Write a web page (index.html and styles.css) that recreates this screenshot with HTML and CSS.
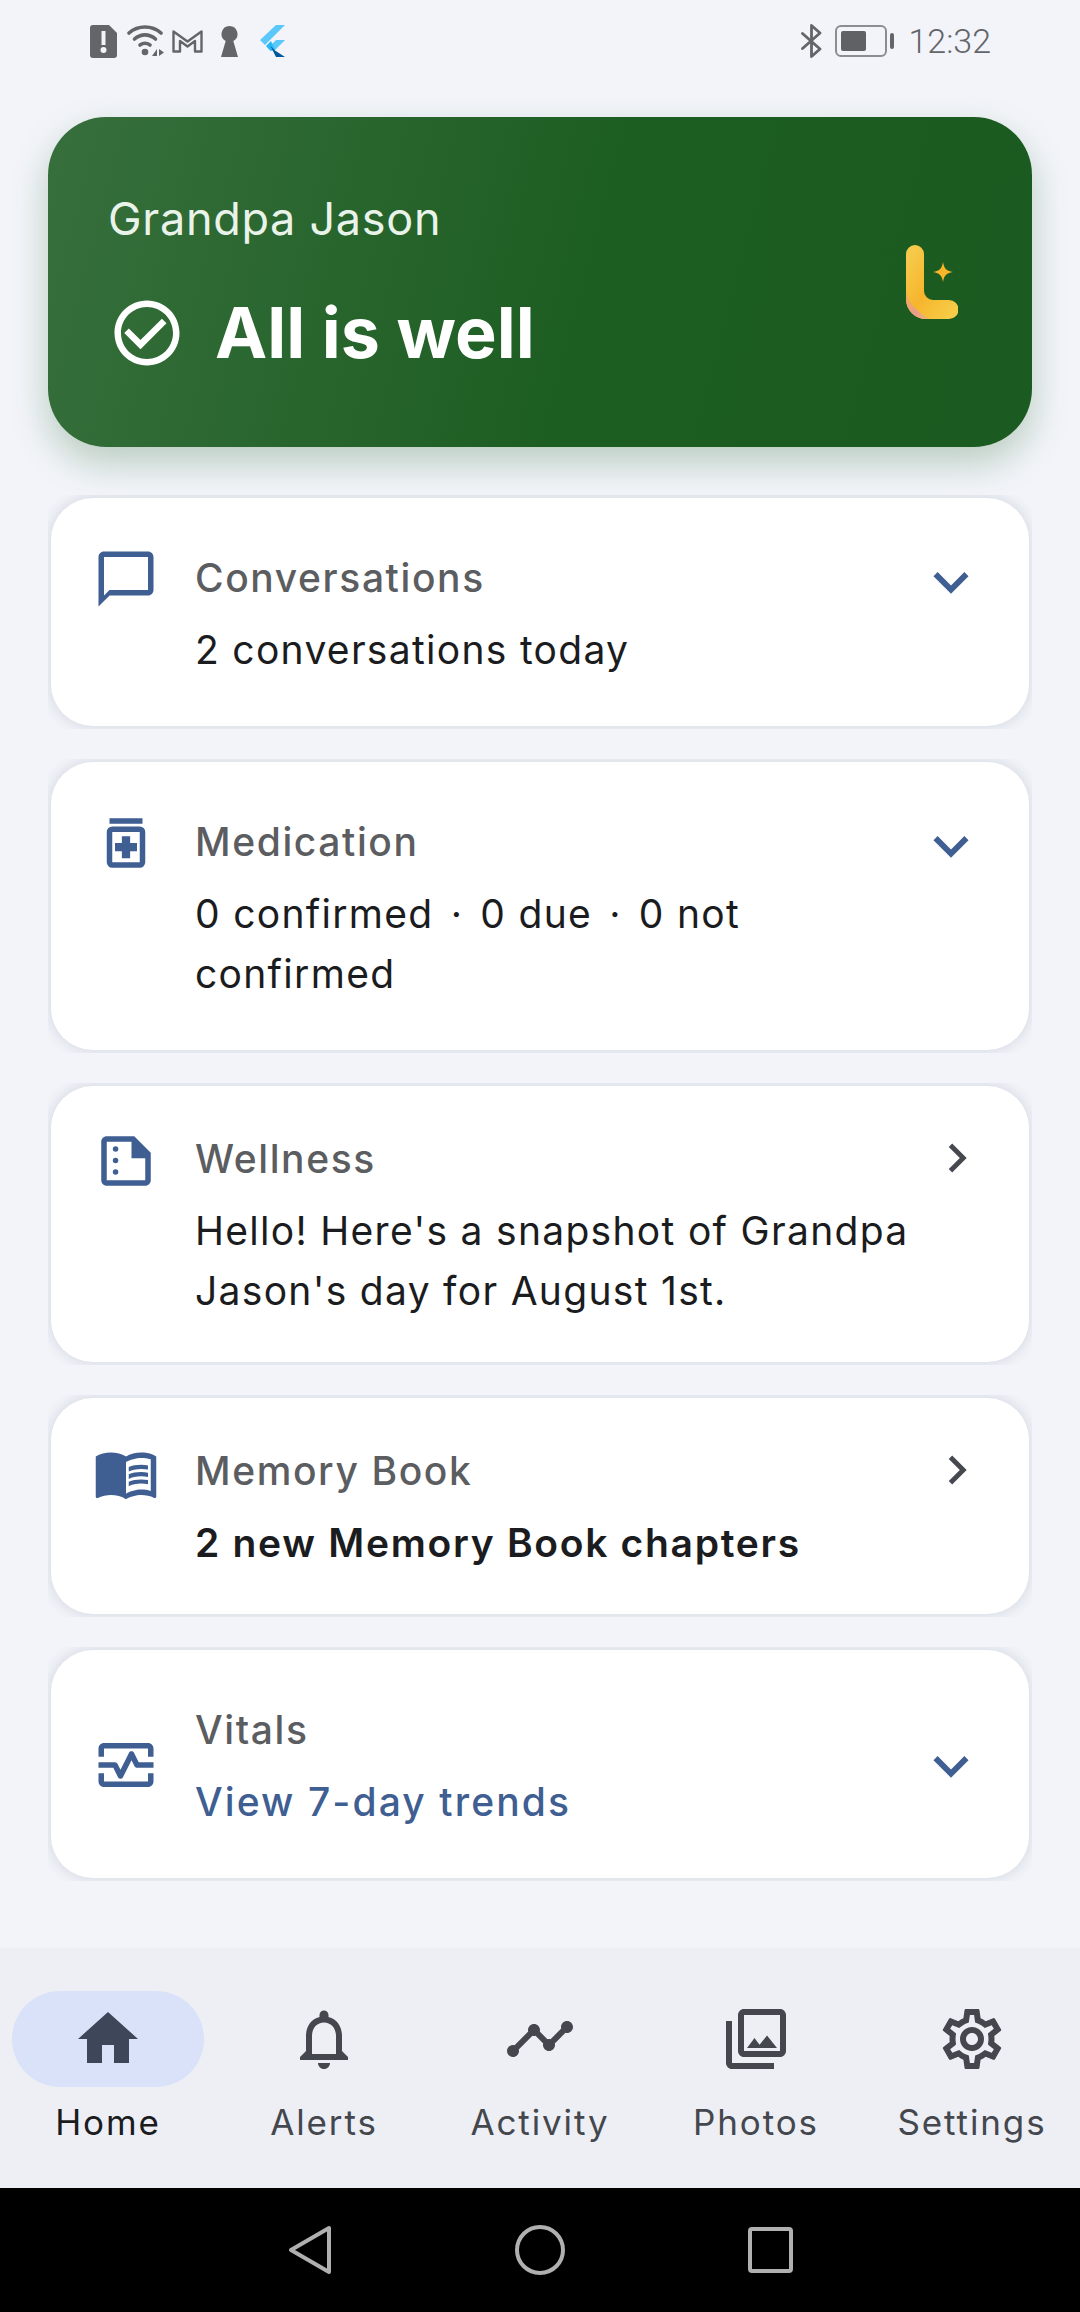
FILE: index.html
```html
<!DOCTYPE html>
<html lang="en">
<head>
    <meta charset="UTF-8">
    <meta name="viewport" content="width=device-width, initial-scale=1.0">
    <title>Home</title>
    <link rel="stylesheet" href="styles.css">
</head>
<body>
    <div class="status-bar">
        <div class="status-left">
            <svg class="st-sim" viewBox="0 0 27 33"><path fill="#636569" fill-rule="evenodd" d="M3 0h16l8 8v22a3 3 0 0 1-3 3H3a3 3 0 0 1-3-3V3a3 3 0 0 1 3-3zM11.500 6v14h4V6zM13.500 22a3 3 0 1 0 0 6 3 3 0 0 0 0-6z"/></svg>
            <svg class="st-wifi" viewBox="0 0 38 32"><g fill="none" stroke="#636569" stroke-width="3.600" stroke-linecap="round"><path d="M2 8C11 0 25 0 34 8"/><path d="M7.500 14C14 8.500 22 8.500 28.500 14"/><path d="M13 20c3.500-2.500 6.500-2.500 10 0"/></g><circle cx="18" cy="27" r="3.300" fill="#636569"/><path fill="#636569" d="M30 24v7h-5zM32 24l5 3.500-5 3.500z"/></svg>
            <svg class="st-gmail" viewBox="0 0 31 24"><path fill="none" stroke="#636569" stroke-width="2.400" stroke-linejoin="round" d="M1.500 2.500l14 10 14-10v20h-6.500V12l-7.500 5.500L8 12v10.500H1.500z"/></svg>
            <svg class="st-key" viewBox="0 0 17 31"><path fill="#636569" d="M8.500 0a8 8 0 0 1 3.800 15L17 31H0l4.700-16A8 8 0 0 1 8.500 0z"/></svg>
            <svg class="st-flutter" viewBox="0 0 26 32"><path fill="#5ac8fa" d="M17 0h9L6 20l-5-5zM17 15h9l-10 10-4.500-4.500z"/><path fill="#29b6f6" d="M7 21l5-5 4 9-4.500 1z"/><path fill="#01579b" d="M11.500 21l4.500 4.500L26 32h-9z"/></svg>
        </div>
        <div class="status-right">
            <svg class="st-bt" viewBox="0 0 21 34"><path fill="none" stroke="#636569" stroke-width="2.800" stroke-linecap="round" stroke-linejoin="round" d="M1.500 9.500L19 25l-8.500 7.500V1.500L19 9 1.500 24.500"/></svg>
            <div class="battery">
                <div class="battery-body"><div class="battery-fill"></div></div>
                <div class="battery-nub"></div>
            </div>
            <span class="clock">12:32</span>
        </div>
    </div>

    <main class="content">
        <section class="hero">
            <div class="hero-text">
                <div class="hero-name">Grandpa Jason</div>
                <div class="hero-status">
                    <svg class="hero-check" viewBox="0 0 24 24"><path fill="#fff" d="M16.590 7.580 10 14.170l-3.590-3.580L5 12l5 5 8-8zM12 2C6.480 2 2 6.480 2 12s4.480 10 10 10 10-4.480 10-10S17.520 2 12 2zm0 18c-4.420 0-8-3.580-8-8s3.580-8 8-8 8 3.580 8 8-3.580 8-8 8z"/></svg>
                    <span>All is well</span>
                </div>
            </div>
            <svg class="hero-logo" viewBox="0 0 52 74">
                <defs>
                    <linearGradient id="logoGrad" x1="0" y1="0" x2="1" y2="1">
                        <stop offset="0" stop-color="#f6cf52"/>
                        <stop offset="0.5" stop-color="#f7b52e"/>
                        <stop offset="1" stop-color="#f7d14c"/>
                    </linearGradient>
                    <linearGradient id="logoFoot" x1="0" y1="0" x2="1" y2="1">
                        <stop offset="0" stop-color="#f3b04a"/>
                        <stop offset="0.6" stop-color="#ea9c8e"/>
                        <stop offset="1" stop-color="#f3b866"/>
                    </linearGradient>
                </defs>
                <path fill="url(#logoGrad)" d="M9 0a9 9 0 0 1 9 9v37a9 9 0 0 0 9 9h16a9 9 0 0 1 0 19H20A20 20 0 0 1 0 54V9a9 9 0 0 1 9-9z"/>
                <path fill="url(#logoFoot)" d="M0 44c1 14 12 24 24 30h-4A20 20 0 0 1 0 54z"/>
                <path fill="#f8b52c" d="M37 17c1 6 3 9 10 10-7 1-9 4-10 10-1-6-3-9-10-10 7-1 9-4 10-10z"/>
            </svg>
        </section>

        <div class="card-clip">
            <article class="card card-tall">
                <svg class="card-icon" viewBox="0 0 24 24"><path d="M20 2H4c-1.100 0-2 .9-2 2v18l4-4h14c1.100 0 2-.9 2-2V4c0-1.100-.9-2-2-2zm0 14H6l-2 2V4h16v12z"/></svg>
                <div class="card-body">
                    <h2 class="card-title">Conversations</h2>
                    <p class="card-text">2 conversations today</p>
                </div>
                <svg class="card-chevron chevron-down" viewBox="0 0 24 24"><path d="M16.590 8.590 12 13.170 7.410 8.590 6 10l6 6 6-6z"/></svg>
            </article>
        </div>

        <div class="card-clip">
            <article class="card card-tall">
                <svg class="card-icon" viewBox="0 0 24 24"><path fill-rule="evenodd" d="M6 3h12v2H6zM7 6h10a2 2 0 0 1 2 2v11a2 2 0 0 1-2 2H7a2 2 0 0 1-2-2V8a2 2 0 0 1 2-2zM7 8v11h10V8zM10.500 9.500h3v2.500H16v3h-2.500v2.500h-3V15H8v-3h2.500z"/></svg>
                <div class="card-body">
                    <h2 class="card-title">Medication</h2>
                    <p class="card-text">0 confirmed&hairsp;&nbsp;·&nbsp;&hairsp;0 due&hairsp;&nbsp;·&nbsp;&hairsp;0 not confirmed</p>
                </div>
                <svg class="card-chevron chevron-down" viewBox="0 0 24 24"><path d="M16.590 8.590 12 13.170 7.410 8.590 6 10l6 6 6-6z"/></svg>
            </article>
        </div>

        <div class="card-clip">
            <article class="card">
                <svg class="card-icon" viewBox="0 0 24 24"><path fill-rule="evenodd" d="M15 3H5c-1.100 0-2 .9-2 2v14c0 1.100.9 2 2 2h14c1.100 0 2-.9 2-2V9zM5 19V5h9v6h5v8z"/><circle cx="8.200" cy="7.600" r="1"/><circle cx="8.200" cy="11.800" r="1"/><circle cx="8.200" cy="16" r="1"/></svg>
                <div class="card-body">
                    <h2 class="card-title">Wellness</h2>
                    <p class="card-text">Hello! Here's a snapshot of Grandpa Jason's day for August 1st.</p>
                </div>
                <svg class="card-chevron chevron-right" viewBox="0 0 24 24"><path d="M10 6 8.590 7.410 13.170 12l-4.580 4.590L10 18l6-6z"/></svg>
            </article>
        </div>

        <div class="card-clip">
            <article class="card">
                <svg class="card-icon" viewBox="0 0 24 24"><path d="M21 5c-1.110-.35-2.330-.5-3.500-.5-1.950 0-4.050.4-5.500 1.500-1.450-1.100-3.550-1.500-5.500-1.500S2.450 4.900 1 6v14.650c0 .25.25.5.5.5.1 0 .15-.05.25-.05C3.100 20.450 5.050 20 6.500 20c1.950 0 4.050.4 5.500 1.500 1.350-.85 3.800-1.500 5.500-1.500 1.650 0 3.350.3 4.750 1.050.1.05.15.05.25.05.25 0 .5-.25.5-.5V6c-.6-.45-1.250-.75-2-1zm0 13.500c-1.100-.35-2.300-.5-3.500-.5-1.700 0-4.150.65-5.500 1.500V8c1.350-.85 3.800-1.500 5.500-1.500 1.200 0 2.400.15 3.500.5v11.500z"/><path d="M17.500 10.500c.88 0 1.730.09 2.500.26V9.240c-.79-.15-1.640-.24-2.500-.24-1.700 0-3.240.29-4.500.83v1.660c1.130-.64 2.700-.99 4.500-.99zM13 12.490v1.660c1.130-.64 2.700-.99 4.500-.99.88 0 1.730.09 2.500.26V11.900c-.79-.15-1.640-.24-2.500-.24-1.700 0-3.240.3-4.500.83zM17.500 14.330c-1.700 0-3.240.29-4.500.83v1.660c1.130-.64 2.700-.99 4.500-.99.88 0 1.730.09 2.500.26v-1.520c-.79-.16-1.640-.24-2.500-.24z"/></svg>
                <div class="card-body">
                    <h2 class="card-title">Memory Book</h2>
                    <p class="card-text card-text-strong">2 new Memory Book chapters</p>
                </div>
                <svg class="card-chevron chevron-right" viewBox="0 0 24 24"><path d="M10 6 8.590 7.410 13.170 12l-4.580 4.590L10 18l6-6z"/></svg>
            </article>
        </div>

        <div class="card-clip">
            <article class="card card-tall card-center">
                <svg class="card-icon" viewBox="0 0 24 24"><path d="M20 4H4c-1.100 0-2 .9-2 2v3h2V6h16v3h2V6c0-1.100-.9-2-2-2zm0 14H4v-3H2v3c0 1.100.9 2 2 2h16c1.100 0 2-.9 2-2v-3h-2v3z"/><path d="M14.890 7.550c-.34-.68-1.450-.68-1.790 0L10 13.760l-1.110-2.210A1.010 1.010 0 0 0 8 11H2v2h5.380l1.720 3.450c.18.34.52.55.9.55s.72-.21.89-.55L14 10.240l1.110 2.210c.17.34.51.55.89.55h6v-2h-5.380l-1.720-3.450z"/></svg>
                <div class="card-body">
                    <h2 class="card-title">Vitals</h2>
                    <p class="card-text card-text-link">View 7-day trends</p>
                </div>
                <svg class="card-chevron chevron-down" viewBox="0 0 24 24"><path d="M16.590 8.590 12 13.170 7.410 8.590 6 10l6 6 6-6z"/></svg>
            </article>
        </div>
    </main>

    <nav class="bottom-nav">
        <div class="nav-item nav-active">
            <div class="nav-pill"><svg viewBox="0 0 24 24"><path d="M10 20v-6h4v6h5v-8h3L12 3 2 12h3v8z"/></svg></div>
            <span>Home</span>
        </div>
        <div class="nav-item">
            <div class="nav-pill"><svg viewBox="0 0 24 24"><path d="M12 22c1.100 0 2-.9 2-2h-4c0 1.100.9 2 2 2zm6-6v-5c0-3.070-1.630-5.640-4.500-6.320V4c0-.83-.67-1.500-1.500-1.500s-1.500.67-1.500 1.500v.68C7.640 5.360 6 7.920 6 11v5l-2 2v1h16v-1l-2-2zm-2 1H8v-6c0-2.480 1.510-4.500 4-4.500s4 2.020 4 4.500v6z"/></svg></div>
            <span>Alerts</span>
        </div>
        <div class="nav-item">
            <div class="nav-pill"><svg viewBox="0 0 24 24"><path d="M23 8c0 1.100-.9 2-2 2-.18 0-.35-.02-.51-.07l-3.560 3.550c.05.16.07.34.07.52 0 1.100-.9 2-2 2s-2-.9-2-2c0-.18.02-.36.07-.52l-2.550-2.550c-.16.05-.34.07-.52.07s-.36-.02-.52-.07l-4.550 4.560c.05.16.07.33.07.51 0 1.100-.9 2-2 2s-2-.9-2-2 .9-2 2-2c.18 0 .35.02.51.07l4.560-4.550C8.020 9.360 8 9.180 8 9c0-1.100.9-2 2-2s2 .9 2 2c0 .18-.02.36-.07.52l2.550 2.550c.16-.05.34-.07.52-.07s.36.02.52.07l3.550-3.560C19.020 8.350 19 8.180 19 8c0-1.100.9-2 2-2s2 .9 2 2z"/></svg></div>
            <span>Activity</span>
        </div>
        <div class="nav-item">
            <div class="nav-pill"><svg viewBox="0 0 24 24"><path d="M20 4v12H8V4h12m0-2H8c-1.100 0-2 .9-2 2v12c0 1.100.9 2 2 2h12c1.100 0 2-.9 2-2V4c0-1.100-.9-2-2-2zm-8.500 9.670 1.690 2.260 2.480-3.100L19 15H9zM2 6v14c0 1.100.9 2 2 2h14v-2H4V6H2z"/></svg></div>
            <span>Photos</span>
        </div>
        <div class="nav-item">
            <div class="nav-pill"><svg viewBox="0 0 24 24"><path d="M19.430 12.980c.04-.32.07-.64.07-.98 0-.34-.03-.66-.07-.98l2.110-1.650c.19-.15.24-.42.12-.64l-2-3.460c-.09-.16-.26-.25-.44-.25-.06 0-.12.01-.17.03l-2.490 1c-.52-.4-1.080-.73-1.690-.98l-.38-2.650C14.460 2.180 14.250 2 14 2h-4c-.25 0-.46.18-.49.42l-.38 2.650c-.61.25-1.170.59-1.690.98l-2.490-1c-.06-.02-.12-.03-.18-.03-.17 0-.34.09-.43.25l-2 3.460c-.13.22-.07.49.12.64l2.110 1.650c-.04.32-.07.65-.07.98 0 .33.03.66.07.98l-2.110 1.650c-.19.15-.24.42-.12.64l2 3.460c.09.16.26.25.44.25.06 0 .12-.01.17-.03l2.490-1c.52.4 1.080.73 1.690.98l.38 2.650c.03.24.24.42.49.42h4c.25 0 .46-.18.49-.42l.38-2.650c.61-.25 1.170-.59 1.690-.98l2.490 1c.06.02.12.03.18.03.17 0 .34-.09.43-.25l2-3.460c.12-.22.07-.49-.12-.64l-2.110-1.650zm-1.980-1.710c.04.31.05.52.05.73 0 .21-.02.43-.05.73l-.14 1.130.89.7 1.080.84-.7 1.210-1.270-.51-1.040-.42-.9.68c-.43.32-.84.56-1.250.73l-1.060.43-.16 1.130-.2 1.350h-1.400l-.19-1.350-.16-1.130-1.060-.43c-.43-.18-.83-.41-1.230-.71l-.91-.7-1.060.43-1.270.51-.7-1.210 1.080-.84.89-.7-.14-1.130c-.03-.31-.05-.54-.05-.74s.02-.43.05-.73l.14-1.130-.89-.7-1.080-.84.7-1.210 1.270.51 1.040.42.9-.68c.43-.32.84-.56 1.250-.73l1.060-.43.16-1.130.2-1.350h1.390l.19 1.350.16 1.130 1.060.43c.43.18.83.41 1.230.71l.91.7 1.060-.43 1.270-.51.7 1.210-1.070.85-.89.7.14 1.130zM12 8c-2.210 0-4 1.790-4 4s1.790 4 4 4 4-1.790 4-4-1.790-4-4-4zm0 6c-1.100 0-2-.9-2-2s.9-2 2-2 2 .9 2 2-.9 2-2 2z"/></svg></div>
            <span>Settings</span>
        </div>
    </nav>

    <div class="system-bar">
        <svg class="sys-back" viewBox="0 0 44 50"><path fill="none" stroke="#b0b0b0" stroke-width="4" stroke-linejoin="round" d="M41 3v44L3 25z"/></svg>
        <div class="sys-home"></div>
        <div class="sys-recent"></div>
    </div>
</body>
</html>
```

FILE: styles.css
```css
* {
    margin: 0;
    padding: 0;
    box-sizing: border-box;
}

body {
    width: 1080px;
    height: 2312px;
    background-color: #f2f4f9;
    font-family: 'Inter', sans-serif;
    display: flex;
    flex-direction: column;
    overflow: hidden;
}

/* status bar */
.status-bar {
    height: 117px;
    flex-shrink: 0;
    display: flex;
    justify-content: space-between;
    align-items: flex-start;
    padding: 24px 90px 0;
}

.status-left,
.status-right {
    display: flex;
    align-items: center;
    height: 34px;
}

.status-left svg {
    display: block;
}

.st-sim { width: 27px; height: 33px; margin-right: 10px; }
.st-wifi { width: 38px; height: 32px; margin-right: 7px; }
.st-gmail { width: 31px; height: 24px; margin-right: 18px; }
.st-key { width: 17px; height: 31px; margin-right: 21px; }
.st-flutter { width: 26px; height: 32px; }

.st-bt { width: 21px; height: 34px; margin-right: 13px; }

.battery {
    display: flex;
    align-items: center;
    gap: 3px;
    margin-right: 14px;
}

.battery-body {
    width: 52px;
    height: 32px;
    border: 2px solid #8b8d90;
    border-radius: 6px;
    padding: 4px;
}

.battery-fill {
    width: 25px;
    height: 100%;
    background-color: #5f6165;
    border-radius: 2px;
}

.battery-nub {
    width: 4px;
    height: 16px;
    background-color: #636569;
    border-radius: 2px;
}

.clock {
    font-family: 'Roboto', sans-serif;
    font-weight: 300;
    font-size: 34px;
    color: #636569;
    line-height: 34px;
    margin-right: -1px;
}

/* main column */
.content {
    flex: 1;
    padding: 0 48px;
}

.hero {
    height: 330px;
    border-radius: 58px;
    background: linear-gradient(105deg, #376f3c 0%, #1c5d21 56%, #1b5a20 100%);
    box-shadow: 0 16px 36px rgba(27, 94, 32, 0.26);
    display: flex;
    align-items: center;
    justify-content: space-between;
    padding: 0 74px 0 60px;
    margin-bottom: 48px;
}

.hero-name {
    font-size: 45px;
    letter-spacing: 0.7px;
    color: #eaf3ea;
    line-height: 60px;
    margin-bottom: 42px;
}

.hero-status {
    display: flex;
    align-items: center;
    gap: 29px;
    font-size: 70px;
    font-weight: 700;
    color: white;
    line-height: 84px;
}

.hero-check {
    width: 78px;
    height: 78px;
}

.hero-logo {
    width: 52px;
    height: 74px;
}

/* cards */
.card-clip {
    overflow: hidden;
    padding: 3px;
    margin-bottom: 30px;
}

.card {
    background-color: white;
    border-radius: 42px;
    box-shadow: 0 0 12px 3px rgba(60, 70, 110, 0.12);
    display: flex;
    align-items: flex-start;
    padding: 41px 43px 41px 42px;
}

.card-tall {
    padding-top: 48px;
    padding-bottom: 46px;
}

.card-center {
    align-items: center;
}

.card-icon {
    width: 66px;
    height: 66px;
    flex-shrink: 0;
    fill: #3f5e92;
    margin: 1px 36px 0 0;
}

.card-tall .card-icon {
    margin-top: 0;
}

.card-body {
    flex: 1;
}

.card-title {
    font-size: 39px;
    font-weight: 500;
    letter-spacing: 1.6px;
    color: #5b5d61;
    line-height: 64px;
    margin-bottom: 10px;
}

.card-text {
    font-size: 39px;
    letter-spacing: 1.3px;
    color: #1b1c20;
    line-height: 60px;
}

.card-text-strong {
    font-weight: 600;
    letter-spacing: 1.7px;
}

.card-text-link {
    color: #3f5e92;
    font-weight: 500;
    letter-spacing: 2.1px;
}

.card-chevron {
    flex-shrink: 0;
}

.chevron-down {
    width: 70px;
    height: 70px;
    margin-top: 1px;
    fill: #3f5e92;
}

.chevron-right {
    width: 58px;
    height: 58px;
    margin-top: 2px;
    fill: #45484e;
}

/* bottom navigation */
.bottom-nav {
    height: 240px;
    flex-shrink: 0;
    background-color: #edeff4;
    display: grid;
    grid-template-columns: repeat(5, 1fr);
    padding-top: 43px;
}

.nav-item {
    display: flex;
    flex-direction: column;
    align-items: center;
    font-size: 35px;
    line-height: 44px;
    color: #44474e;
    letter-spacing: 1.9px;
}

.nav-active {
    color: #1b1c20;
}

.nav-pill {
    width: 192px;
    height: 96px;
    border-radius: 48px;
    display: flex;
    align-items: center;
    justify-content: center;
    margin-bottom: 13px;
}

.nav-pill svg {
    width: 72px;
    height: 72px;
    fill: #44474e;
}

.nav-active .nav-pill {
    background-color: #d9e2f8;
}

.nav-active .nav-pill svg {
    fill: #3e4759;
}

/* android buttons */
.system-bar {
    height: 124px;
    flex-shrink: 0;
    background-color: black;
    display: flex;
    align-items: center;
    justify-content: center;
    gap: 183px;
}

.sys-back {
    width: 44px;
    height: 50px;
}

.sys-home {
    width: 50px;
    height: 50px;
    border: 4px solid #b0b0b0;
    border-radius: 50%;
}

.sys-recent {
    width: 45px;
    height: 46px;
    border: 4px solid #b0b0b0;
    border-radius: 4px;
}
```
